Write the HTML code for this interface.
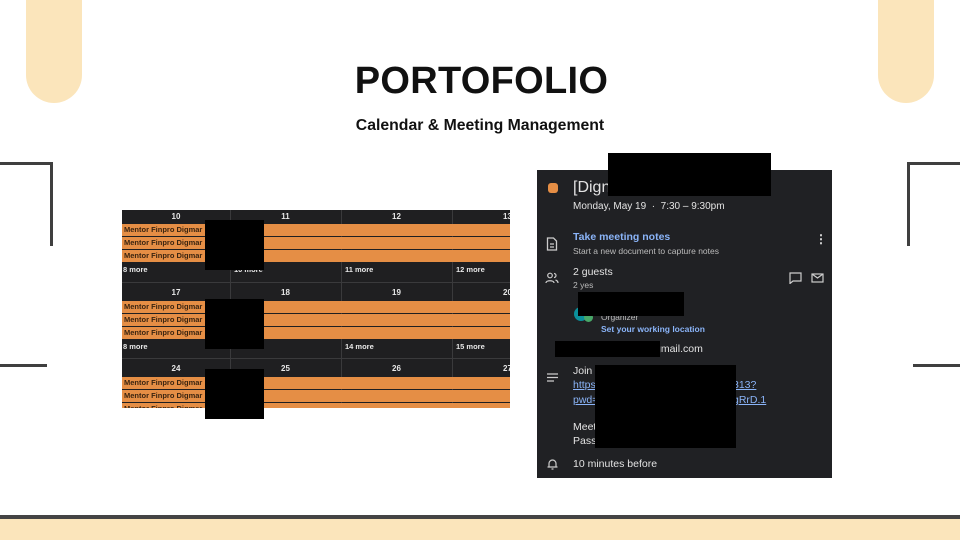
<!DOCTYPE html>
<html><head><meta charset="utf-8"><style>
*{margin:0;padding:0;box-sizing:border-box}
body{width:960px;height:540px;position:relative;overflow:hidden;background:#fff;font-family:"Liberation Sans",sans-serif}
.a{position:absolute}
.pill{background:#fbe5bb;width:56px;height:103px;top:0;border-radius:0 0 28px 28px}
.ln{background:#3f3f3f}
.cal{left:122px;top:210px;width:388px;height:198px;background:#1f1f21;overflow:hidden;font-size:7.5px;color:#e8e8e8;font-weight:bold}
.ev{position:absolute;left:0;width:388px;height:12px;background:#e58e45;color:#3a2410;font-size:7.5px;padding-left:2px;line-height:12px}
.hd{position:absolute;text-align:center;font-size:8px}
.vl{position:absolute;width:1px;background:#3a3a3c}
.hl{position:absolute;height:1px;left:0;width:388px;background:#3a3a3c}
.pn{left:537px;top:170px;width:295px;height:308px;background:#202124;color:#e3e3e3;font-size:10px}
.pn .a{white-space:nowrap}
.bl{background:#000;position:absolute}
.lk{color:#8ab4f8}
</style></head><body>
<div class="a pill" style="left:26px"></div>
<div class="a pill" style="left:878px"></div>
<div class="a ln" style="left:0;top:162px;width:53px;height:3px"></div>
<div class="a ln" style="left:50px;top:162px;width:3px;height:84px"></div>
<div class="a ln" style="left:0;top:364px;width:47px;height:3px"></div>
<div class="a ln" style="left:907px;top:162px;width:53px;height:3px"></div>
<div class="a ln" style="left:907px;top:162px;width:3px;height:84px"></div>
<div class="a ln" style="left:913px;top:364px;width:47px;height:3px"></div>
<div class="a" style="left:0;top:515px;width:960px;height:4px;background:#444"></div>
<div class="a" style="left:0;top:519px;width:960px;height:21px;background:#fbe5bb"></div>
<div class="a" style="left:0;top:60px;width:963px;text-align:center;font-size:38px;font-weight:bold;color:#111;letter-spacing:0.3px">PORTOFOLIO</div>
<div class="a" style="left:0;top:117px;width:960px;text-align:center;font-size:15.8px;font-weight:bold;color:#111">Calendar &amp; Meeting Management</div>

<div class="a cal">
<div class="vl" style="left:108px;top:0;height:198px"></div>
<div class="vl" style="left:219px;top:0;height:198px"></div>
<div class="vl" style="left:330px;top:0;height:198px"></div>
<div class="hl" style="top:72px"></div><div class="hl" style="top:148px"></div>
<div class="hd" style="left:0;width:108px;top:2px">10</div>
<div class="hd" style="left:108px;width:111px;top:2px">11</div>
<div class="hd" style="left:219px;width:111px;top:2px">12</div>
<div class="hd" style="left:330px;width:111px;top:2px">13</div>
<div class="ev" style="top:14px">Mentor Finpro Digmar</div>
<div class="ev" style="top:27px">Mentor Finpro Digmar</div>
<div class="ev" style="top:40px">Mentor Finpro Digmar</div>
<div class="a" style="left:1px;top:55px">8 more</div>
<div class="a" style="left:112px;top:55px">10 more</div>
<div class="a" style="left:223px;top:55px">11 more</div>
<div class="a" style="left:334px;top:55px">12 more</div>
<div class="hd" style="left:0;width:108px;top:78px">17</div>
<div class="hd" style="left:108px;width:111px;top:78px">18</div>
<div class="hd" style="left:219px;width:111px;top:78px">19</div>
<div class="hd" style="left:330px;width:111px;top:78px">20</div>
<div class="ev" style="top:91px">Mentor Finpro Digmar</div>
<div class="ev" style="top:104px">Mentor Finpro Digmar</div>
<div class="ev" style="top:117px">Mentor Finpro Digmar</div>
<div class="a" style="left:1px;top:132px">8 more</div>
<div class="a" style="left:223px;top:132px">14 more</div>
<div class="a" style="left:334px;top:132px">15 more</div>
<div class="hd" style="left:0;width:108px;top:154px">24</div>
<div class="hd" style="left:108px;width:111px;top:154px">25</div>
<div class="hd" style="left:219px;width:111px;top:154px">26</div>
<div class="hd" style="left:330px;width:111px;top:154px">27</div>
<div class="ev" style="top:167px">Mentor Finpro Digmar</div>
<div class="ev" style="top:180px">Mentor Finpro Digmar</div>
<div class="ev" style="top:193px">Mentor Finpro Digmar</div>
</div>
<div class="bl" style="left:205px;top:220px;width:59px;height:50px"></div>
<div class="bl" style="left:205px;top:299px;width:59px;height:50px"></div>
<div class="bl" style="left:205px;top:369px;width:59px;height:50px"></div>

<div class="a pn">
<div class="a" style="left:11px;top:13px;width:10px;height:10px;border-radius:3px;background:#e58e45"></div>
<div class="a" style="left:36px;top:9px;font-size:16px">[Dign</div>
<div class="a" style="left:36px;top:31px;font-size:10px">Monday, May 19 &nbsp;·&nbsp; 7:30 – 9:30pm</div>
<svg class="a" style="left:9px;top:67px" width="12" height="14" viewBox="0 0 12 14"><path d="M1.5 1h6l3 3v9h-9z M4 7h4 M4 10h4" fill="none" stroke="#ccc" stroke-width="1.3"/></svg>
<div class="a lk" style="left:36px;top:61px;font-size:10.5px;font-weight:bold">Take meeting notes</div>
<div class="a" style="left:36px;top:76px;font-size:8.5px;color:#bbb">Start a new document to capture notes</div>
<div class="a" style="left:278px;top:62px;font-size:12px;font-weight:bold">⋮</div>
<svg class="a" style="left:8px;top:102px" width="14" height="12" viewBox="0 0 14 12"><circle cx="5" cy="3.5" r="2.3" fill="none" stroke="#ccc" stroke-width="1.2"/><path d="M1 11c0-3 8-3 8 0 M9 1.5a2 2 0 0 1 0 4 M10.5 8c1.5.5 2.5 1.5 2.5 3" fill="none" stroke="#ccc" stroke-width="1.2"/></svg>
<div class="a" style="left:36px;top:96px;font-size:10.5px">2 guests</div>
<div class="a" style="left:36px;top:110px;font-size:8.5px;color:#bbb">2 yes</div>
<svg class="a" style="left:252px;top:102px" width="13" height="12" viewBox="0 0 13 12"><path d="M1 1h11v8H4l-3 2.5z" fill="none" stroke="#ccc" stroke-width="1.2"/></svg>
<svg class="a" style="left:274px;top:103px" width="13" height="10" viewBox="0 0 13 10"><rect x="1" y="1" width="11" height="8" fill="none" stroke="#ccc" stroke-width="1.2"/><path d="M1 1l5.5 4 5.5-4" fill="none" stroke="#ccc" stroke-width="1.2"/></svg>
<div class="a" style="left:37px;top:137px;width:14px;height:14px;border-radius:7px;background:#0b8f9a"></div>
<div class="a" style="left:47px;top:143px;width:9px;height:9px;border-radius:5px;background:#48a868"></div>
<div class="a" style="left:64px;top:142px;font-size:8.5px;color:#bbb">Organizer</div>
<div class="a lk" style="left:64px;top:154px;font-size:8.5px;font-weight:bold">Set your working location</div>
<div class="a" style="left:118px;top:173px;font-size:10.5px">gmail.com</div>
<svg class="a" style="left:10px;top:203px" width="11" height="9" viewBox="0 0 11 9"><path d="M0 1h11M0 4.5h11M0 8h7" stroke="#ccc" stroke-width="1.2"/></svg>
<div class="a" style="left:36px;top:195px;font-size:10.5px">Join</div>
<div class="a lk" style="left:36px;top:209px;font-size:10.5px;text-decoration:underline">https</div>
<div class="a lk" style="left:36px;top:224px;font-size:10.5px;text-decoration:underline">pwd=</div>
<div class="a lk" style="left:196px;top:209px;font-size:10.5px;text-decoration:underline">313?</div>
<div class="a lk" style="left:196px;top:224px;font-size:10.5px;text-decoration:underline">gRrD.1</div>
<div class="a" style="left:36px;top:251px;font-size:10.5px">Meet</div>
<div class="a" style="left:36px;top:265px;font-size:10.5px">Pass</div>
<svg class="a" style="left:10px;top:288px" width="11" height="12" viewBox="0 0 11 12"><path d="M2 9V5.5a3.5 3.5 0 0 1 7 0V9h1.5H.5 M4.5 11h2" fill="none" stroke="#ccc" stroke-width="1.2"/></svg>
<div class="a" style="left:36px;top:288px;font-size:10.5px">10 minutes before</div>
</div>
<div class="bl" style="left:608px;top:153px;width:163px;height:43px"></div>
<div class="bl" style="left:578px;top:292px;width:106px;height:24px"></div>
<div class="bl" style="left:555px;top:341px;width:105px;height:16px"></div>
<div class="bl" style="left:595px;top:365px;width:141px;height:83px"></div>
</body></html>
